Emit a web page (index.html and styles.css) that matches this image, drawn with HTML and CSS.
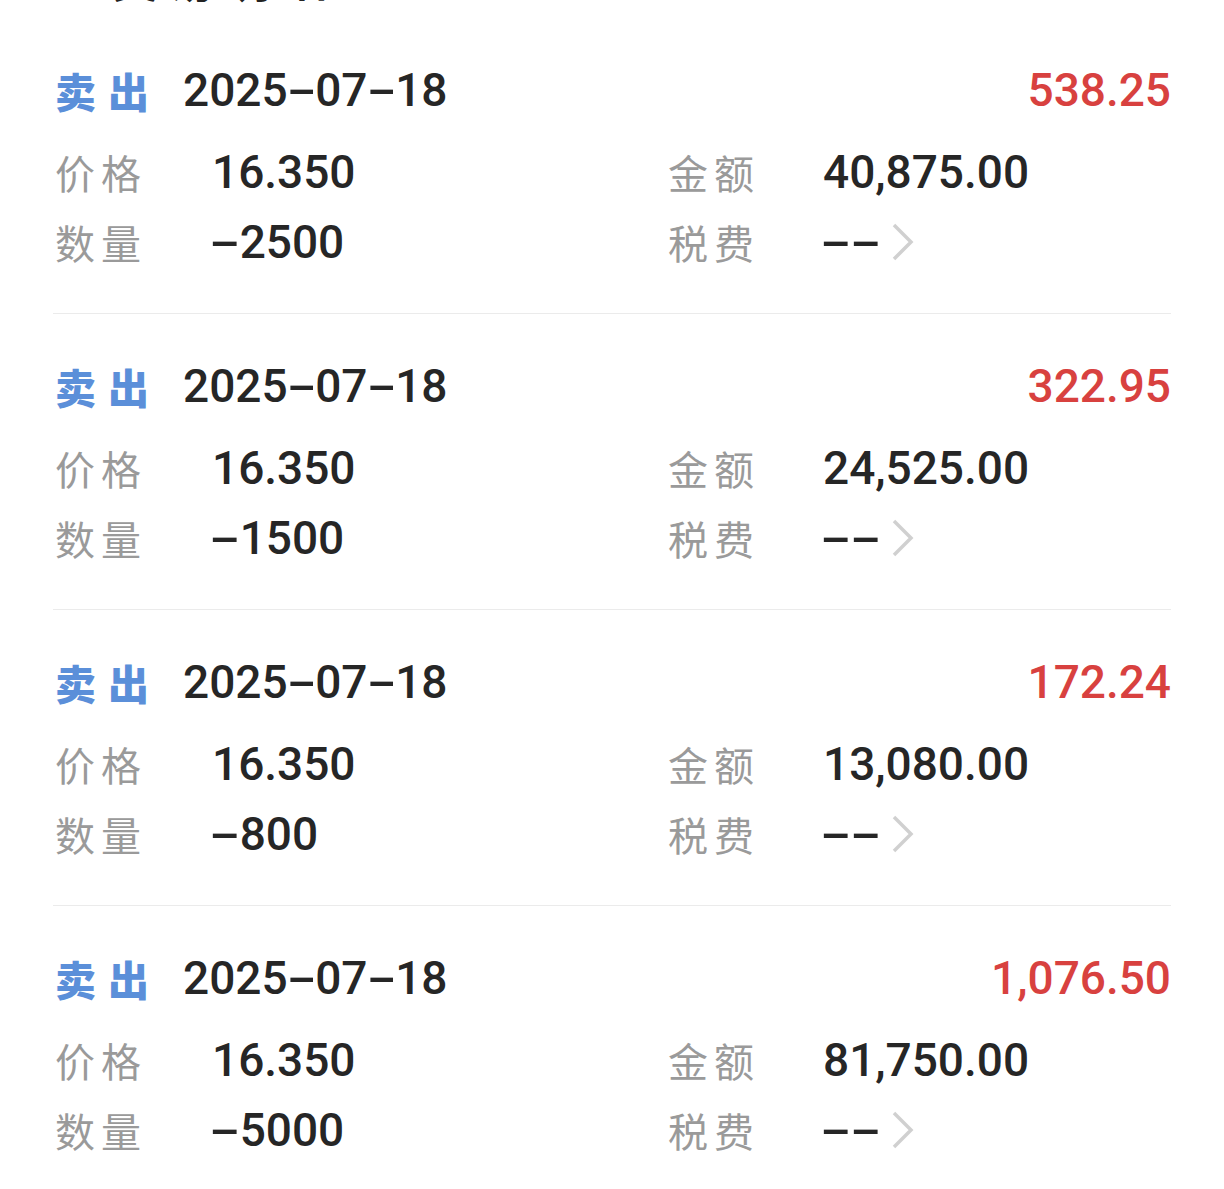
FILE: index.html
```html
<!DOCTYPE html>
<html lang="zh">
<head>
<meta charset="utf-8">
<title>交易记录</title>
<link rel="stylesheet" href="styles.css">
</head>
<body>
<div class="page">
  <div class="page-title"><div class="page-title-text">交易明细</div></div>

  <div class="trade">
    <div class="trade-head">
      <span class="trade-type">卖出</span>
      <span class="trade-date">2025<span class="dash">-</span>07<span class="dash">-</span>18</span>
      <span class="trade-amount">538.25</span>
    </div>
    <div class="trade-grid">
      <div class="cell"><span class="label">价格</span><span class="value">16.350</span></div>
      <div class="cell"><span class="label label-r">金额</span><span class="value">40,875.00</span></div>
      <div class="cell"><span class="label">数量</span><span class="value"><span class="dash">-</span>2500</span></div>
      <div class="cell"><span class="label label-r">税费</span><span class="value"><span class="dash">-</span><span class="dash">-</span></span><svg class="chev" viewBox="0 0 24 40"><path d="M3 3 L20 20 L3 37" /></svg></div>
    </div>
  </div>

  <div class="trade">
    <div class="trade-head">
      <span class="trade-type">卖出</span>
      <span class="trade-date">2025<span class="dash">-</span>07<span class="dash">-</span>18</span>
      <span class="trade-amount">322.95</span>
    </div>
    <div class="trade-grid">
      <div class="cell"><span class="label">价格</span><span class="value">16.350</span></div>
      <div class="cell"><span class="label label-r">金额</span><span class="value">24,525.00</span></div>
      <div class="cell"><span class="label">数量</span><span class="value"><span class="dash">-</span>1500</span></div>
      <div class="cell"><span class="label label-r">税费</span><span class="value"><span class="dash">-</span><span class="dash">-</span></span><svg class="chev" viewBox="0 0 24 40"><path d="M3 3 L20 20 L3 37" /></svg></div>
    </div>
  </div>

  <div class="trade">
    <div class="trade-head">
      <span class="trade-type">卖出</span>
      <span class="trade-date">2025<span class="dash">-</span>07<span class="dash">-</span>18</span>
      <span class="trade-amount">172.24</span>
    </div>
    <div class="trade-grid">
      <div class="cell"><span class="label">价格</span><span class="value">16.350</span></div>
      <div class="cell"><span class="label label-r">金额</span><span class="value">13,080.00</span></div>
      <div class="cell"><span class="label">数量</span><span class="value"><span class="dash">-</span>800</span></div>
      <div class="cell"><span class="label label-r">税费</span><span class="value"><span class="dash">-</span><span class="dash">-</span></span><svg class="chev" viewBox="0 0 24 40"><path d="M3 3 L20 20 L3 37" /></svg></div>
    </div>
  </div>

  <div class="trade">
    <div class="trade-head">
      <span class="trade-type">卖出</span>
      <span class="trade-date">2025<span class="dash">-</span>07<span class="dash">-</span>18</span>
      <span class="trade-amount">1,076.50</span>
    </div>
    <div class="trade-grid">
      <div class="cell"><span class="label">价格</span><span class="value">16.350</span></div>
      <div class="cell"><span class="label label-r">金额</span><span class="value">81,750.00</span></div>
      <div class="cell"><span class="label">数量</span><span class="value"><span class="dash">-</span>5000</span></div>
      <div class="cell"><span class="label label-r">税费</span><span class="value"><span class="dash">-</span><span class="dash">-</span></span><svg class="chev" viewBox="0 0 24 40"><path d="M3 3 L20 20 L3 37" /></svg></div>
    </div>
  </div>
</div>
</body>
</html>
```

FILE: styles.css
```css
html, body {
  margin: 0;
  padding: 0;
  background: #ffffff;
}

body {
  font-family: Roboto, "Noto Sans CJK SC", sans-serif;
  color: #222222;
  overflow: hidden;
}

.page {
  padding: 0 53px;
}

.page-title {
  height: 18px;
  overflow: hidden;
}

.page-title-text {
  margin-top: -48px;
  margin-left: 58px;
  font-family: "Noto Sans CJK SC", sans-serif;
  font-size: 48px;
  line-height: 48px;
  font-weight: 700;
  letter-spacing: 8px;
  color: #222222;
}

.trade {
  padding: 42px 0 36px;
  border-bottom: 1px solid #ebebeb;
}

.trade-head {
  display: flex;
  align-items: center;
  height: 60px;
  margin-bottom: 17px;
}

.trade-type {
  font-family: "Noto Sans CJK SC", sans-serif;
  font-size: 41px;
  font-weight: 900;
  letter-spacing: 12px;
  color: #5b8fd9;
  padding-left: 2px;
}

.trade-date {
  margin-left: 22px;
  font-size: 46px;
  font-weight: 500;
  color: #262626;
}

.dash {
  display: inline-block;
  transform: scaleX(1.9);
  margin: 0 6px;
}

.trade-amount {
  margin-left: auto;
  font-size: 46px;
  font-weight: 500;
  color: #d8413f;
}

.trade-grid {
  display: grid;
  grid-template-columns: 613px 1fr;
  grid-auto-rows: 70px;
}

.cell {
  display: flex;
  align-items: center;
}

.label {
  width: 159px;
  flex: none;
  padding-left: 2px;
  box-sizing: border-box;
  font-family: "Noto Sans CJK SC", sans-serif;
  font-size: 40px;
  letter-spacing: 6px;
  color: #9a9a9a;
}

.label-r {
  width: 157px;
}

.value {
  font-size: 46px;
  font-weight: 500;
  color: #262626;
}

.value .dash {
  transform: scaleX(2);
  margin: 0 7px;
}

.value .dash:first-child {
  margin-left: 5px;
}

.chev {
  width: 24px;
  height: 40px;
  margin-left: 11px;
  fill: none;
  stroke: #d0d0d0;
  stroke-width: 3.5;
}
```
